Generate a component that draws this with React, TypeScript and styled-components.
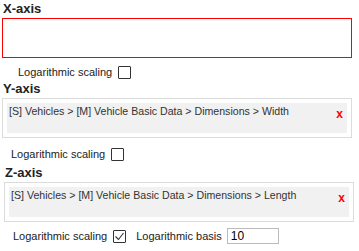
import styled, { createGlobalStyle } from "styled-components";

const Global = createGlobalStyle`
    body {
        margin: 0;
        background: #fff;
        font-family: "Liberation Sans", Arial, sans-serif;
        color: #222;
    }
`;

const Page = styled.div`
    width: 359px;
    height: 251px;
    overflow: hidden;
    display: flex;
    flex-direction: column;
`;

const Section = styled.div<{ $left: number; $top: number }>`
    display: flex;
    flex-direction: column;
    padding-left: ${(p) => p.$left}px;
    margin-top: ${(p) => p.$top}px;
`;

const Label = styled.div`
    font-size: 13px;
    font-weight: bold;
    line-height: 16px;
    color: #222;
    margin-left: 1px;
`;

const Drop = styled.div<{ $error?: boolean }>`
    width: 350px;
    height: 40px;
    box-sizing: border-box;
    margin-top: 1px;
    border: 1px solid ${(p) => (p.$error ? "#f00" : "#dcdcdc")};
    padding: 4px;
    display: flex;
`;

const Chip = styled.div`
    flex: 1;
    background: #f1f1f1;
    display: flex;
    justify-content: space-between;
    align-items: flex-start;
    padding: 2px 4px 0 2px;
    font-size: 10.6px;
    line-height: 13px;
    color: #333;
`;

const Remove = styled.span`
    color: #f00;
    font-size: 12px;
    font-weight: bold;
    line-height: 14px;
    margin-top: 2px;
`;

const OptionRow = styled.div<{ $left: number; $top: number }>`
    display: flex;
    align-items: center;
    gap: 6px;
    margin-left: ${(p) => p.$left}px;
    margin-top: ${(p) => p.$top}px;
    font-size: 11px;
    line-height: 13px;
    color: #222;
`;

const Box = styled.span`
    width: 13px;
    height: 13px;
    box-sizing: border-box;
    border: 1px solid #333;
    border-radius: 1px;
    background: #fff;
    display: inline-flex;
    align-items: center;
    justify-content: center;
`;

const Caption = styled.span`
    margin-left: 4px;
`;

const Basis = styled.input`
    width: 52px;
    height: 16px;
    box-sizing: border-box;
    border: 1px solid #bbb;
    padding: 0 3px;
    font-family: "Liberation Sans", Arial, sans-serif;
    font-size: 12px;
    color: #000;
    margin-left: -1px;
    outline: none;
`;

const Check = () => (
    <svg width="11" height="11" viewBox="0 0 11 11">
        <path d="M1.5 5.5 L4.5 8.5 L9.5 2" fill="none" stroke="#333" strokeWidth="1.1" />
    </svg>
);

const App = () => {
    return (
        <Page>
            <Global />
            <Section $left={2} $top={1}>
                <Label>X-axis</Label>
                <Drop $error />
            </Section>
            <OptionRow $left={18} $top={8}>
                Logarithmic scaling
                <Box />
            </OptionRow>
            <Section $left={2} $top={2}>
                <Label>Y-axis</Label>
                <Drop>
                    <Chip>
                        [S] Vehicles &gt; [M] Vehicle Basic Data &gt; Dimensions &gt; Width
                        <Remove>x</Remove>
                    </Chip>
                </Drop>
            </Section>
            <OptionRow $left={11} $top={10}>
                Logarithmic scaling
                <Box />
            </OptionRow>
            <Section $left={4} $top={4}>
                <Label>Z-axis</Label>
                <Drop>
                    <Chip>
                        [S] Vehicles &gt; [M] Vehicle Basic Data &gt; Dimensions &gt; Length
                        <Remove>x</Remove>
                    </Chip>
                </Drop>
            </Section>
            <OptionRow $left={13} $top={6}>
                Logarithmic scaling
                <Box>
                    <Check />
                </Box>
                <Caption>Logarithmic basis</Caption>
                <Basis defaultValue="10" />
            </OptionRow>
        </Page>
    );
};

export default App;
